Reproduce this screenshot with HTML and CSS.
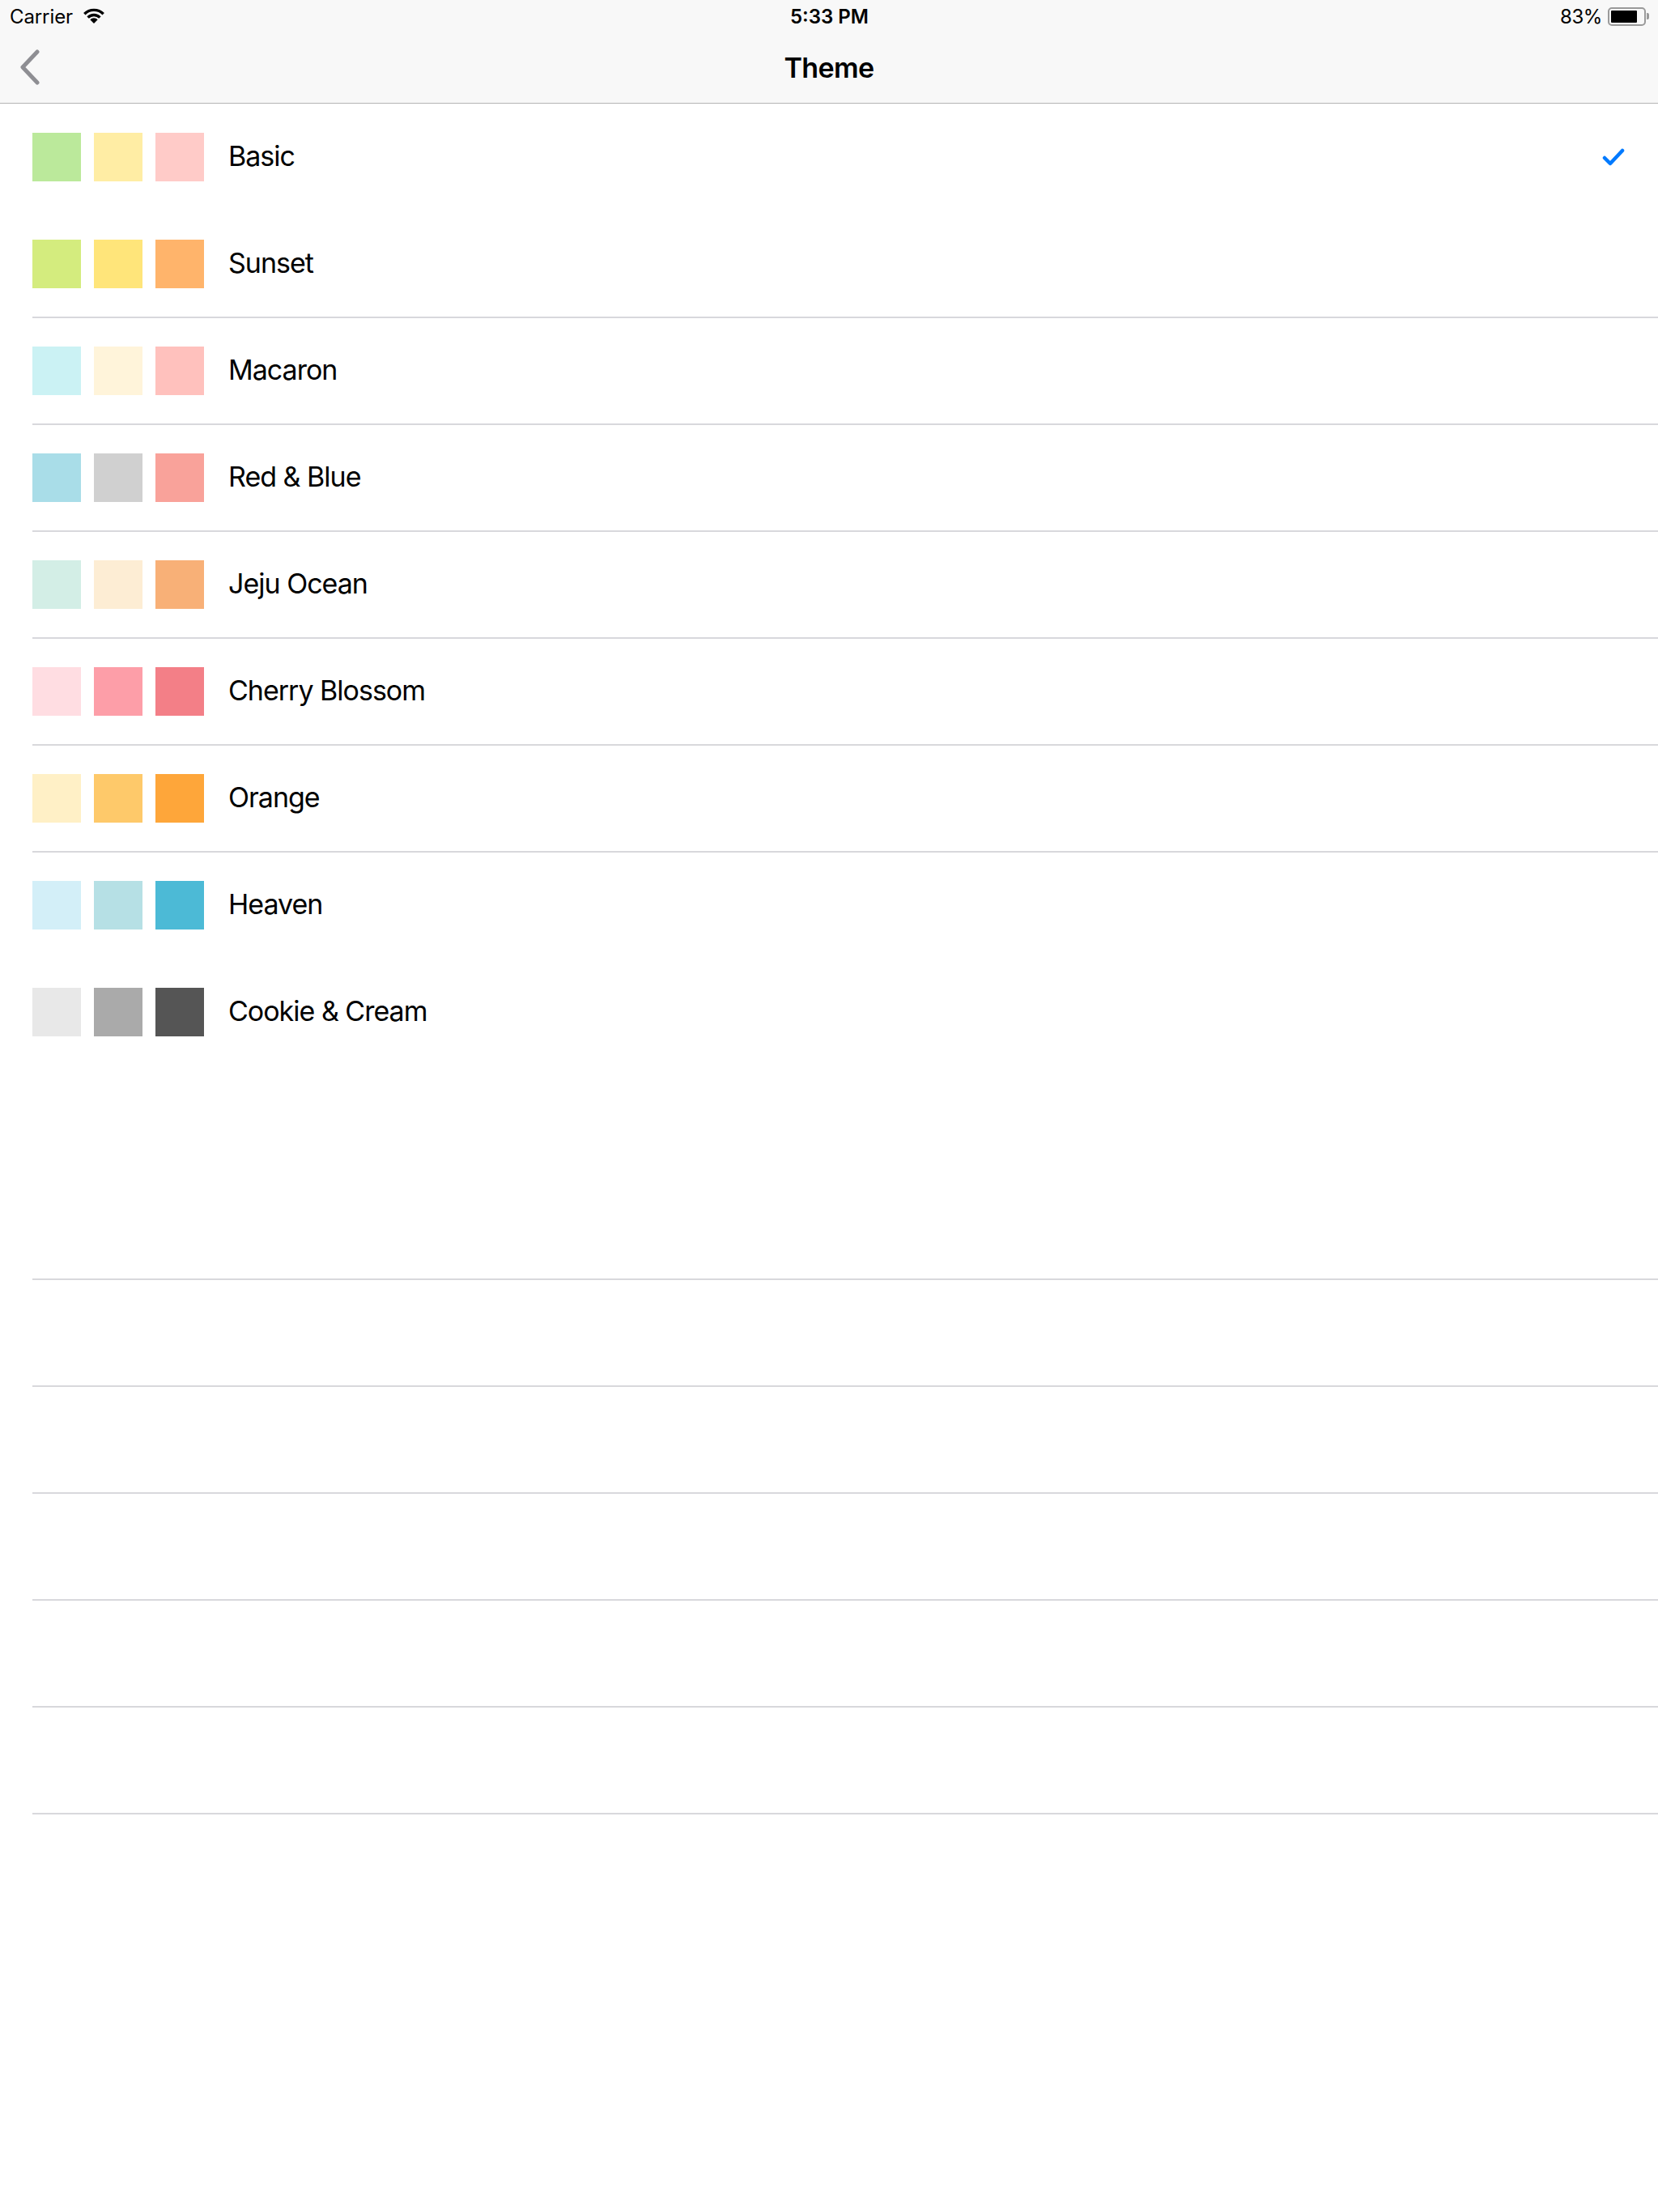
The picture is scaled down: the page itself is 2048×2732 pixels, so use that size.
FILE: index.html
```html
<!DOCTYPE html>
<html>
<head>
<meta charset="utf-8">
<title>Theme</title>
<link rel="stylesheet" href="styles.css">
</head>
<body>
<header class="header">
  <div class="status">
    <div class="status-left">
      <span class="carrier">Carrier</span>
      <svg class="wifi" viewBox="0 0 28 21" width="28" height="21">
        <path d="M14 20 L9.3 15.3 A6.6 6.6 0 0 1 18.7 15.3 Z" fill="#000"/>
        <path d="M6.6 12.6 A10.5 10.5 0 0 1 21.4 12.6" fill="none" stroke="#000" stroke-width="3.4"/>
        <path d="M2.3 8.2 A16.5 16.5 0 0 1 25.7 8.2" fill="none" stroke="#000" stroke-width="3.4"/>
      </svg>
    </div>
    <div class="status-time">5:33 PM</div>
    <div class="status-right">
      <span class="pct">83%</span>
      <span class="battery"><span class="battery-fill"></span></span>
      <span class="battery-tip"></span>
    </div>
  </div>
  <nav class="nav">
    <svg class="back" viewBox="0 0 26 44" width="26" height="44">
      <polyline points="22,3 4,22 22,41" fill="none" stroke="#8e8e93" stroke-width="5" stroke-linecap="round" stroke-linejoin="round"/>
    </svg>
    <div class="title">Theme</div>
  </nav>
</header>
<main class="list">
  <div class="row">
    <div class="swatches"><span class="sw" style="background:#bbe99b"></span><span class="sw" style="background:#ffeda4"></span><span class="sw" style="background:#ffcbc8"></span></div>
    <span class="label">Basic</span>
    <svg class="check" viewBox="0 0 28 24" width="28" height="24">
      <polyline points="3,12 10,19 25,3" fill="none" stroke="#007aff" stroke-width="4.5" stroke-linecap="round" stroke-linejoin="round"/>
    </svg>
  </div>
  <div class="row sep">
    <div class="swatches"><span class="sw" style="background:#d4ec7e"></span><span class="sw" style="background:#ffe57a"></span><span class="sw" style="background:#ffb46b"></span></div>
    <span class="label">Sunset</span>
  </div>
  <div class="row sep">
    <div class="swatches"><span class="sw" style="background:#cbf2f4"></span><span class="sw" style="background:#fff4da"></span><span class="sw" style="background:#ffc1bd"></span></div>
    <span class="label">Macaron</span>
  </div>
  <div class="row sep">
    <div class="swatches"><span class="sw" style="background:#a9dde8"></span><span class="sw" style="background:#d0d0d0"></span><span class="sw" style="background:#f9a29a"></span></div>
    <span class="label">Red &amp; Blue</span>
  </div>
  <div class="row sep">
    <div class="swatches"><span class="sw" style="background:#d3eee6"></span><span class="sw" style="background:#fdedd4"></span><span class="sw" style="background:#f8b077"></span></div>
    <span class="label">Jeju Ocean</span>
  </div>
  <div class="row sep">
    <div class="swatches"><span class="sw" style="background:#ffdde2"></span><span class="sw" style="background:#fd9ea8"></span><span class="sw" style="background:#f37f87"></span></div>
    <span class="label">Cherry Blossom</span>
  </div>
  <div class="row sep">
    <div class="swatches"><span class="sw" style="background:#fff0c6"></span><span class="sw" style="background:#fec96a"></span><span class="sw" style="background:#fea63a"></span></div>
    <span class="label">Orange</span>
  </div>
  <div class="row">
    <div class="swatches"><span class="sw" style="background:#d3eff8"></span><span class="sw" style="background:#b6e0e5"></span><span class="sw" style="background:#4cbad6"></span></div>
    <span class="label">Heaven</span>
  </div>
  <div class="row">
    <div class="swatches"><span class="sw" style="background:#e8e8e8"></span><span class="sw" style="background:#aaaaaa"></span><span class="sw" style="background:#555555"></span></div>
    <span class="label">Cookie &amp; Cream</span>
  </div>
  <div class="row"></div>
  <div class="row sep"></div>
  <div class="row sep"></div>
  <div class="row sep"></div>
  <div class="row sep"></div>
  <div class="row sep"></div>
  <div class="row sep"></div>
</main>
</body>
</html>
```
FILE: styles.css
```css
html, body {
  margin: 0;
  padding: 0;
  background: #ffffff;
}
body {
  width: 2048px;
  height: 2732px;
  overflow: hidden;
  font-family: "Inter", "Roboto", "Liberation Sans", sans-serif;
  color: #000;
}
.header {
  background: #f8f8f8;
  border-bottom: 1px solid #b4b4b4;
}
.status {
  height: 40px;
  display: flex;
  align-items: center;
  justify-content: space-between;
  padding: 0 11px 0 12px;
  font-size: 24px;
  position: relative;
}
.status-left {
  display: flex;
  align-items: center;
  gap: 12px;
  width: 300px;
}
.carrier {
  letter-spacing: -0.1px;
}
.wifi {
  display: block;
  margin-top: -2px;
}
.status-time {
  font-weight: 600;
  letter-spacing: 0;
}
.status-right {
  display: flex;
  align-items: center;
  justify-content: flex-end;
  width: 300px;
}
.pct {
  margin-right: 7px;
  letter-spacing: -0.4px;
}
.battery {
  box-sizing: border-box;
  width: 47px;
  height: 23px;
  border: 2px solid #9a9a9a;
  border-radius: 5px;
  padding: 2px;
  display: flex;
}
.battery-fill {
  width: 83%;
  height: 100%;
  background: #000;
  border-radius: 1px;
}
.battery-tip {
  width: 3px;
  height: 8px;
  background: #9a9a9a;
  border-radius: 0 2px 2px 0;
  margin-left: 1px;
}
.nav {
  height: 87px;
  display: flex;
  align-items: center;
  justify-content: center;
  position: relative;
}
.back {
  position: absolute;
  left: 24px;
  top: 21px;
}
.title {
  font-size: 34px;
  font-weight: 600;
  letter-spacing: -0.6px;
}
.list {
  display: flex;
  flex-direction: column;
}
.row {
  height: 132px;
  display: flex;
  align-items: center;
  padding-left: 40px;
  position: relative;
}
.row.sep::after {
  content: "";
  position: absolute;
  left: 40px;
  right: 0;
  bottom: -1px;
  height: 2px;
  background: #d8d8dc;
}
.swatches {
  display: flex;
  gap: 16px;
}
.sw {
  display: block;
  width: 60px;
  height: 60px;
}
.label {
  margin-left: 30px;
  font-size: 34px;
  letter-spacing: -1px;
  margin-top: -4px;
}
.check {
  position: absolute;
  left: 1979px;
  top: 55px;
}
```
